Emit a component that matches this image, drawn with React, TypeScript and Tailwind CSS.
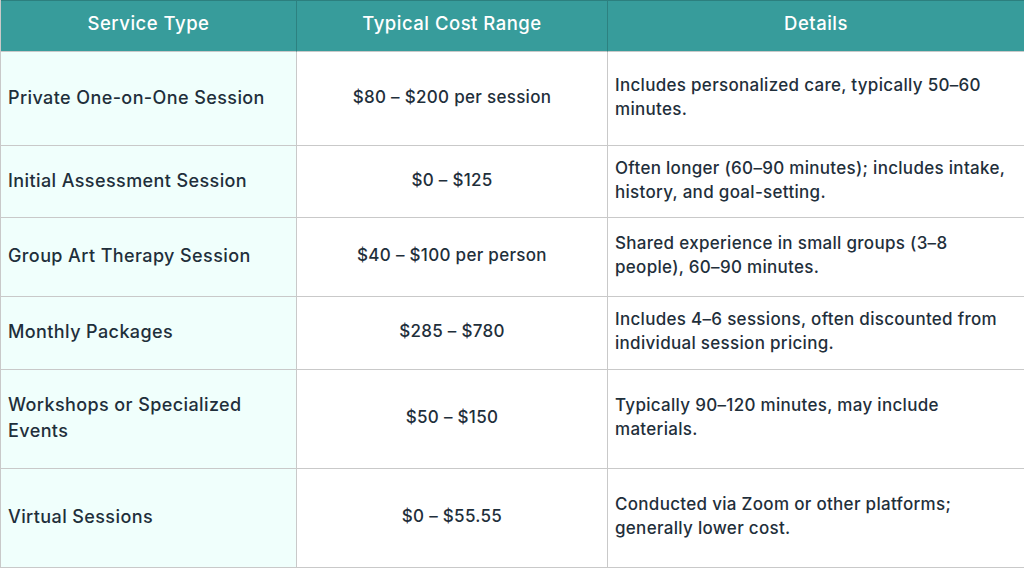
const rows = [
    {
        service: 'Private One-on-One Session',
        cost: '$80 – $200 per session',
        details: 'Includes personalized care, typically 50–60 minutes.',
        h: 'h-[94px]',
    },
    {
        service: 'Initial Assessment Session',
        cost: '$0 – $125',
        details: 'Often longer (60–90 minutes); includes intake, history, and goal-setting.',
        h: 'h-[72px]',
    },
    {
        service: 'Group Art Therapy Session',
        cost: '$40 – $100 per person',
        details: 'Shared experience in small groups (3–8 people), 60–90 minutes.',
        h: 'h-[79px]',
    },
    {
        service: 'Monthly Packages',
        cost: '$285 – $780',
        details: 'Includes 4–6 sessions, often discounted from individual session pricing.',
        h: 'h-[73px]',
    },
    {
        service: 'Workshops or Specialized Events',
        cost: '$50 – $150',
        details: 'Typically 90–120 minutes, may include materials.',
        h: 'h-[99px]',
    },
    {
        service: 'Virtual Sessions',
        cost: '$0 – $55.55',
        details: 'Conducted via Zoom or other platforms; generally lower cost.',
        h: 'h-[99px]',
    },
];

const headCell =
    'h-[52px] flex items-center justify-center pb-[4px] bg-[#379c9b] border-t border-r border-b border-t-[#2c7f7e] border-r-[#2d8180] border-b-[#c9c9c9] text-white text-[18.5px] tracking-[0.5px] font-medium';

export default function App() {
    return (
        <div className="w-[1024px] h-[568px] bg-white font-['Inter',sans-serif] text-[#1f2f3b]">
            <div className="grid grid-cols-[296px_311px_417px] border-l border-[#c9c9c9]">
                {/* Header */}
                <div className={headCell}>Service Type</div>
                <div className={headCell}>Typical Cost Range</div>
                <div className={headCell}>Details</div>

                {rows.map((r) => (
                    <Row key={r.service} {...r} />
                ))}
            </div>
        </div>
    );
}

function Row({
    service,
    cost,
    details,
    h,
}: {
    service: string;
    cost: string;
    details: string;
    h: string;
}) {
    return (
        <>
            <div
                className={`${h} flex items-center pl-[7px] pr-4 pb-[2px] bg-[#f0fffc] border-r border-b border-[#c9c9c9] text-[18px] tracking-[0.4px] font-medium leading-[26px]`}
            >
                {service}
            </div>
            <div
                className={`${h} flex items-center justify-center pb-[2px] border-r border-b border-[#c9c9c9] text-[17px] tracking-[0.3px] font-medium`}
            >
                {cost}
            </div>
            <div
                className={`${h} flex items-center pl-[7px] pr-4 pb-[4px] border-r border-b border-[#c9c9c9] text-[17px] tracking-[0.3px] font-medium leading-[24px]`}
            >
                {details}
            </div>
        </>
    );
}
